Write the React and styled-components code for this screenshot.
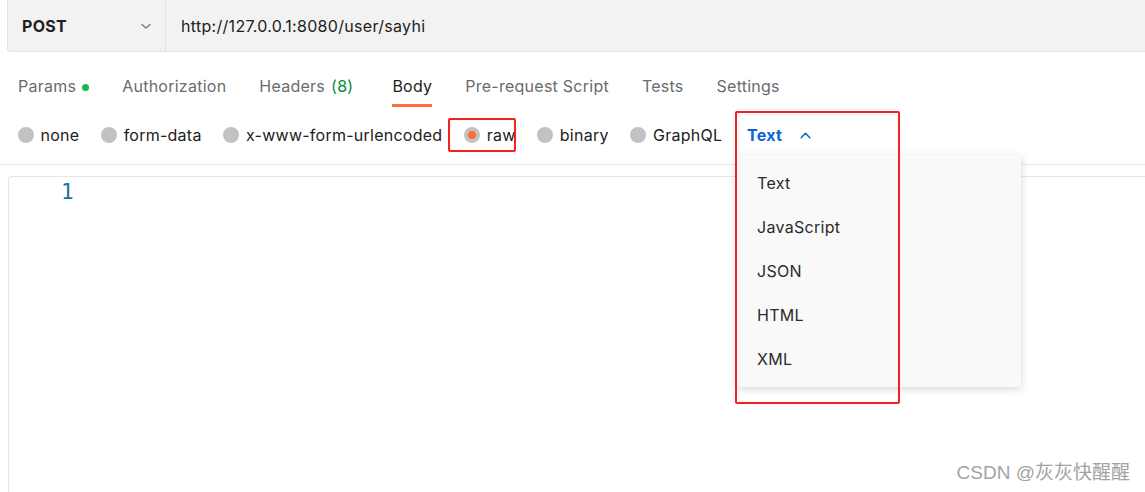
import styled, { createGlobalStyle } from "styled-components";

const GlobalStyle = createGlobalStyle`
  body {
    margin: 0;
    background: #fff;
    font-family: Inter, "Noto Sans", sans-serif;
    letter-spacing: 0.3px;
  }
`;

// Página completa
const Page = styled.div`
  position: relative;
  width: 1145px;
  height: 492px;
  overflow: hidden;
  background: #fff;
`;

// Barra de la URL
const UrlBar = styled.div`
  display: flex;
  align-items: center;
  height: 51px;
  margin-left: 7px;
  background: #f2f2f2;
  border: 1px solid #e3e3e3;
  border-top: none;
  border-right: none;
  border-bottom-left-radius: 4px;
`;

const MethodSelect = styled.div`
  display: flex;
  align-items: center;
  justify-content: space-between;
  width: 158px;
  height: 100%;
  box-sizing: border-box;
  padding: 0 13px 0 14px;
  border-right: 1px solid #e0e0e0;
  font-size: 16px;
  font-weight: 700;
  color: #212121;
`;

const UrlText = styled.div`
  padding-left: 15px;
  font-size: 16px;
  color: #212121;
`;

// Pestañas
const Tabs = styled.div`
  display: flex;
  gap: 33px;
  padding: 0 0 0 18px;
  margin-top: 17px;
  height: 38px;
  letter-spacing: 0.25px;
`;

const Tab = styled.div`
  display: flex;
  align-items: flex-start;
  gap: 6px;
  height: 100%;
  box-sizing: border-box;
  padding-top: 7px;
  padding-right: ${(p) => p.extra || 0}px;
  font-size: 16px;
  color: ${(p) => (p.active ? "#212121" : "#6b6b6b")};
  border-bottom: 3px solid ${(p) => (p.active ? "#ff6c37" : "transparent")};
`;

const Dot = styled.span`
  width: 7px;
  height: 7px;
  border-radius: 50%;
  background: #0cbb52;
  margin-top: 8px;
`;

const Count = styled.span`
  color: #0b8a3e;
`;

// Opciones del cuerpo
const BodyTypes = styled.div`
  display: flex;
  align-items: center;
  gap: 21.8px;
  height: 58px;
  padding-left: 18px;
  border-bottom: 1px solid #e8e8e8;
  margin-top: -1px;
  letter-spacing: 0.25px;
`;

const Radio = styled.label`
  display: flex;
  align-items: center;
  gap: 6.5px;
  font-size: 16px;
  color: #212121;
`;

const Circle = styled.span`
  position: relative;
  width: 16px;
  height: 16px;
  border-radius: 50%;
  background: #c2c2c2;
  &::after {
    content: "";
    display: ${(p) => (p.checked ? "block" : "none")};
    position: absolute;
    left: 4px;
    top: 4px;
    width: 8px;
    height: 8px;
    border-radius: 50%;
    background: #ff6c37;
  }
`;

const Language = styled.div`
  display: flex;
  align-items: center;
  gap: 17px;
  margin-left: 3px;
  font-size: 16px;
  font-weight: 700;
  color: #0b65d1;
`;

// Editor
const Editor = styled.div`
  margin: 11px 0 0 8px;
  height: 320px;
  border-top: 1px solid #e6e6e6;
  border-left: 1px solid #e6e6e6;
  border-top-left-radius: 3px;
`;

const LineNumber = styled.div`
  padding: 3px 0 0 52px;
  font-family: "DejaVu Sans Mono", monospace;
  font-size: 21px;
  letter-spacing: 0;
  color: #1b7398;
`;

// Menú desplegable
const Menu = styled.div`
  position: absolute;
  left: 737px;
  top: 155px;
  width: 284px;
  padding: 6px 0;
  background: #f9f9f9;
  border-radius: 4px;
  box-shadow: 0 2px 8px rgba(0, 0, 0, 0.16);
`;

const MenuItem = styled.div`
  height: 44px;
  line-height: 44px;
  padding-left: 20px;
  font-size: 16px;
  color: #2b2b2b;
`;

// Recuadros rojos de anotación
const Mark = styled.div`
  position: absolute;
  left: ${(p) => p.x}px;
  top: ${(p) => p.y}px;
  width: ${(p) => p.w}px;
  height: ${(p) => p.h}px;
  box-sizing: border-box;
  border: 2px solid #f5211a;
  border-radius: 2px;
`;

const Watermark = styled.div`
  position: absolute;
  right: 15px;
  bottom: 8px;
  font-family: "Liberation Sans", "Noto Sans CJK SC", sans-serif;
  font-size: 19px;
  letter-spacing: 0;
  color: #a3a3a3;
`;

const Chevron = ({ up, color, size = 12 }) => (
  <svg width={size} height={size} viewBox="0 0 12 12" fill="none">
    <path
      d={up ? "M2 8 L6 4 L10 8" : "M2 4.5 L6 8 L10 4.5"}
      stroke={color}
      strokeWidth="1.4"
      strokeLinecap="round"
      strokeLinejoin="round"
    />
  </svg>
);

const tabs = ["Params", "Authorization", "Headers", "Body", "Pre-request Script", "Tests", "Settings"];
const types = ["none", "form-data", "x-www-form-urlencoded", "raw", "binary", "GraphQL"];
const languages = ["Text", "JavaScript", "JSON", "HTML", "XML"];

const App = () => {
  return (
    <Page>
      <GlobalStyle />
      <UrlBar>
        <MethodSelect>
          POST
          <Chevron color="#7a7a7a" />
        </MethodSelect>
        <UrlText>http://127.0.0.1:8080/user/sayhi</UrlText>
      </UrlBar>

      <Tabs>
        {tabs.map((t) => (
          <Tab key={t} active={t === "Body"} extra={t === "Headers" ? 6 : 0}>
            {t}
            {t === "Params" && <Dot />}
            {t === "Headers" && <Count>(8)</Count>}
          </Tab>
        ))}
      </Tabs>

      <BodyTypes>
        {types.map((t) => (
          <Radio key={t}>
            <Circle checked={t === "raw"} />
            {t}
          </Radio>
        ))}
        <Language>
          Text
          <Chevron up color="#0b65d1" size={13} />
        </Language>
      </BodyTypes>

      <Editor>
        <LineNumber>1</LineNumber>
      </Editor>

      <Menu>
        {languages.map((l) => (
          <MenuItem key={l}>{l}</MenuItem>
        ))}
      </Menu>

      <Mark x={448} y={118} w={68} h={34} />
      <Mark x={735} y={111} w={165} h={293} />

      <Watermark>CSDN @灰灰快醒醒</Watermark>
    </Page>
  );
};

export default App;
